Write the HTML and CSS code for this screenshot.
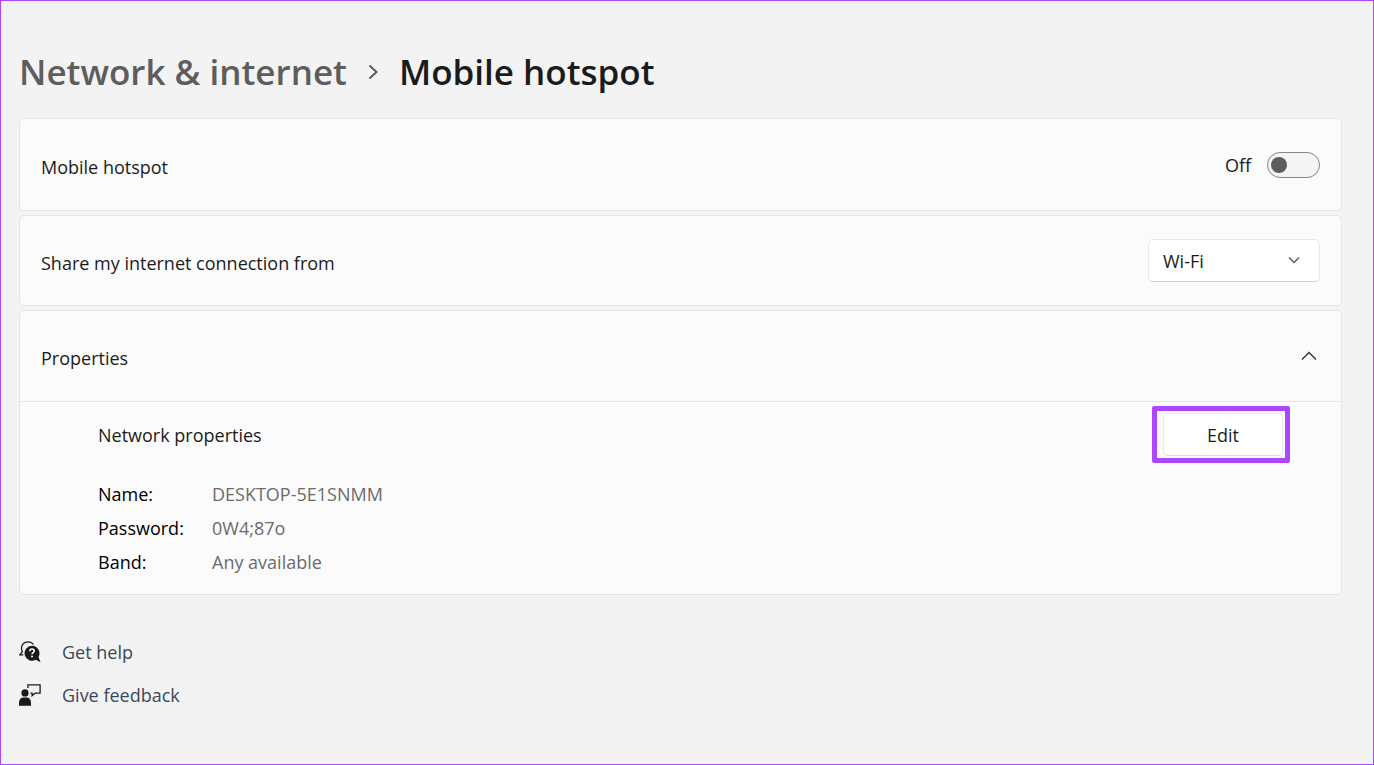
FILE: index.html
```html
<!DOCTYPE html>
<html lang="en">
<head>
    <meta charset="utf-8">
    <meta name="viewport" content="width=device-width, initial-scale=1">
    <title>Mobile hotspot</title>
    <link rel="stylesheet" href="styles.css">
</head>
<body>
    <main class="page">
        <nav class="breadcrumb">
            <a class="crumb" href="#">Network &amp; internet</a>
            <svg class="crumb-arrow" viewBox="0 0 10 16" aria-hidden="true">
                <path d="M1.5 1.5 8.500 8l-7 6.500"/>
            </svg>
            <h1 class="title">Mobile hotspot</h1>
        </nav>

        <div class="cards">
            <section class="card row row-toggle">
                <label class="row-title" for="hotspot">Mobile hotspot</label>
                <div class="toggle">
                    <span>Off</span>
                    <input class="switch" type="checkbox" role="switch" id="hotspot">
                </div>
            </section>

            <section class="card row">
                <label class="row-title" for="share">Share my internet connection from</label>
                <div class="select">
                    <select id="share">
                        <option>Wi-Fi</option>
                    </select>
                    <svg class="select-arrow" viewBox="0 0 12 8" aria-hidden="true">
                        <path d="M1 1.500 6 6.500l5-5"/>
                    </svg>
                </div>
            </section>

            <details class="card" open>
                <summary class="row">
                    <span class="row-title">Properties</span>
                    <svg class="chevron" viewBox="0 0 16 10" aria-hidden="true">
                        <path d="M1 8.500 8 1.500l7 7"/>
                    </svg>
                </summary>
                <div class="properties">
                    <div class="properties-head">
                        <span>Network properties</span>
                        <span class="highlight"><button class="edit" type="button">Edit</button></span>
                    </div>
                    <dl class="list">
                        <dt>Name:</dt>
                        <dd>DESKTOP-5E1SNMM</dd>
                        <dt>Password:</dt>
                        <dd>0W4;87o</dd>
                        <dt>Band:</dt>
                        <dd>Any available</dd>
                    </dl>
                </div>
            </details>
        </div>

        <div class="links">
            <a class="link" href="#">
                <svg class="link-icon" viewBox="0 0 22 22" aria-hidden="true">
                    <path d="M14.500 3.500C13.300 1.800 11.400.8 9 .8 5.300.8 2.500 3.500 2.500 7c0 1.500.3 2.700.9 3.700L.8 13.800h3.500" fill="none" stroke="#1a1a1a" stroke-width="1.300"/>
                    <path d="M13 4.800a7.500 7.500 0 1 0 3.800 14l4.700 2.400-1.900-5.300A7.500 7.500 0 0 0 13 4.800z" fill="#1a1a1a"/>
                    <path d="M10.800 10.200c0-1.400 1-2.200 2.200-2.200s2.200.8 2.200 2c0 1.500-2.200 1.700-2.200 3.300" fill="none" stroke="#fff" stroke-width="1.600"/>
                    <circle cx="13" cy="15.600" r="1" fill="#fff"/>
                </svg>
                Get help
            </a>
            <a class="link" href="#">
                <svg class="link-icon" viewBox="0 0 22 22" aria-hidden="true">
                    <circle cx="6" cy="8.900" r="3.600" fill="#1a1a1a"/>
                    <path d="M0 21.800v-3.300c0-3 1.800-5 4.500-5h3c2.700 0 4.500 2 4.500 5v3.300z" fill="#1a1a1a"/>
                    <path d="M8.900 4V.9h12.200v8.300h-5l-3 2.500V9.200h-1.600" fill="none" stroke="#1a1a1a" stroke-width="1.300"/>
                </svg>
                Give feedback
            </a>
        </div>
    </main>
</body>
</html>
```

FILE: styles.css
```css
* {
    padding: 0;
    margin: 0;
    box-sizing: border-box;
}
body {
    font-family: "Open Sans", "Noto Sans", sans-serif;
    font-size: 18px;
    line-height: 24px;
    color: #1b1b1b;
    background-color: #f3f3f3;
}
.page {
    min-height: 100vh;
    padding: 46px 31px 46px 18px;
    border: 1px solid #ad46ff;
}
a {
    color: inherit;
    text-decoration: none;
}
svg {
    display: block;
    flex: none;
}

/* Breadcrumb */
.breadcrumb {
    display: flex;
    align-items: center;
    gap: 21px;
    margin-bottom: 21px;
    font-size: 35px;
    line-height: 50px;
    font-weight: 600;
}
.crumb {
    color: #5d5d5d;
}
.crumb-arrow {
    width: 10px;
    height: 16px;
    fill: none;
    stroke: #5d5d5d;
    stroke-width: 2;
}
.title {
    font-size: inherit;
    font-weight: inherit;
}

/* Cards */
.cards {
    display: flex;
    flex-direction: column;
    gap: 4px;
}
.card {
    background-color: #fbfbfb;
    border: 1px solid #e5e5e5;
    border-radius: 5px;
}
.row {
    display: flex;
    align-items: center;
    justify-content: space-between;
    min-height: 91px;
    padding: 0 21px;
}
.row-toggle {
    min-height: 93px;
}
.row-title {
    padding-top: 4px;
}
.toggle {
    display: flex;
    align-items: center;
    gap: 16px;
}
.switch {
    appearance: none;
    display: flex;
    align-items: center;
    width: 53px;
    height: 26px;
    padding: 0 3px;
    background-color: #f4f4f4;
    border: 1px solid #868686;
    border-radius: 13px;
}
.switch::before {
    content: "";
    width: 16px;
    height: 16px;
    border-radius: 50%;
    background-color: #5d5d5d;
}
.switch:checked {
    justify-content: flex-end;
}
.select {
    position: relative;
}
select,
.edit {
    font: inherit;
    color: inherit;
    background-color: #fff;
    border: 1px solid #e9e9e9;
    border-bottom-color: #cfcfcf;
    border-radius: 5px;
}
select {
    appearance: none;
    display: block;
    width: 172px;
    height: 43px;
    padding: 0 40px 0 14px;
}
.select-arrow {
    position: absolute;
    top: 17px;
    right: 20px;
    width: 12px;
    height: 8px;
    fill: none;
    stroke: #5d5d5d;
    stroke-width: 1.5;
    pointer-events: none;
}

/* Properties */
summary {
    list-style: none;
    cursor: pointer;
}
summary.row {
    min-height: 90px;
}
.chevron {
    width: 16px;
    height: 10px;
    margin-right: 3px;
    fill: none;
    stroke: #333;
    stroke-width: 1.4;
}
.properties {
    padding: 4px 51px 15px 78px;
    border-top: 1px solid #e5e5e5;
}
.properties-head {
    display: flex;
    align-items: center;
    justify-content: space-between;
    margin-bottom: 14px;
}
.highlight {
    padding: 2px 2px 2px 6px;
    border: 5px solid #ad46ff;
    border-radius: 2px;
}
.edit {
    display: block;
    width: 120px;
    height: 43px;
    border-bottom-color: #dadada;
}
.list {
    display: grid;
    grid-template-columns: 114px 1fr;
    line-height: 34px;
    color: #000;
}
dd {
    color: #6b6b6b;
}

/* Footer links */
.links {
    display: flex;
    flex-direction: column;
    align-items: flex-start;
    gap: 19px;
    margin-top: 45px;
}
.link {
    display: flex;
    align-items: center;
    gap: 21px;
    color: #3b4858;
}
.link-icon {
    width: 22px;
    height: 22px;
}
```
